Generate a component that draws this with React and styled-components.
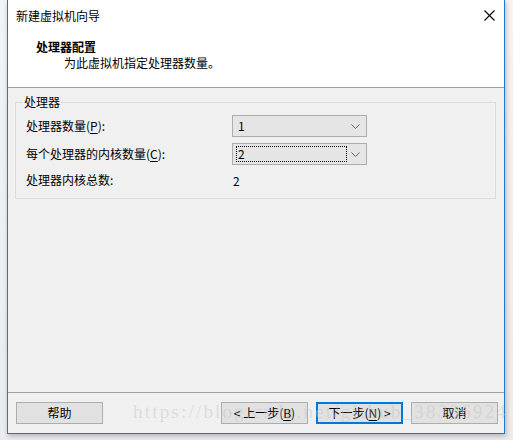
import React from "react";
import styled, { createGlobalStyle } from "styled-components";

const Global = createGlobalStyle`
  html, body { margin: 0; padding: 0; }
  body {
    background: #ededed;
    font-family: "Noto Sans CJK SC", "Noto Sans", sans-serif;
    font-size: 12px;
    color: #000;
    overflow: hidden;
  }
`;

const Page = styled.div`
  width: 513px;
  height: 440px;
  position: relative;
  padding-left: 7px;
  box-sizing: border-box;
  background: linear-gradient(to bottom, #f4f4f4 0%, #ececec 100%);
`;

const Window = styled.div`
  width: 498px;
  height: 434px;
  box-sizing: border-box;
  border: 1px solid #1a7bd0;
  border-top: none;
  display: flex;
  flex-direction: column;
  background: #f0f0f0;
  box-shadow: 1px 2px 5px rgba(0, 0, 0, 0.25);
`;

const TitleBar = styled.div`
  height: 31px;
  background: #fff;
  display: flex;
  align-items: center;
  justify-content: space-between;
  padding: 0 9px 0 8px;
  line-height: 16px;
`;

const Title = styled.span`
  font-size: 12px;
`;

const Header = styled.div`
  background: #fff;
  height: 57px;
  border-bottom: 1px solid #a0a0a0;
  display: flex;
  flex-direction: column;
  padding: 8px 0 0 28px;
  box-sizing: border-box;
`;

const HeaderTitle = styled.div`
  font-weight: bold;
  line-height: 16px;
`;

const HeaderSub = styled.div`
  padding-left: 28px;
  line-height: 16px;
`;

const Body = styled.div`
  flex: 1;
  padding: 6px 8px 0 7px;
`;

const Group = styled.fieldset`
  margin: 0;
  border: 1px solid #dcdcdc;
  padding: 2px 10px 7px 10px;
  width: 481px;
  box-sizing: border-box;
`;

const Legend = styled.legend`
  padding: 0 1px;
  margin-left: -3px;
  line-height: 16px;
`;

const Row = styled.div`
  display: grid;
  grid-template-columns: 206px 135px;
  align-items: center;
  height: 22px;
  margin-top: ${(p) => p.$gap}px;
`;

const Label = styled.span`
  line-height: 16px;
`;

const Key = styled.span`
  text-decoration: underline;
  text-underline-offset: 2px;
`;

const Select = styled.div`
  height: 22px;
  box-sizing: border-box;
  border: 1px solid #adadad;
  background: #e5e5e5;
  display: flex;
  align-items: center;
  justify-content: space-between;
  padding: 0 6px 0 3px;
`;

const SelectValue = styled.span`
  line-height: 14px;
  padding: 0 1px;
  width: ${(p) => (p.$focus ? "111px" : "auto")};
  border: 1px ${(p) => (p.$focus ? "dotted #000" : "solid transparent")};
  box-sizing: border-box;
`;

const Value = styled.span`
  padding-left: 1px;
`;

const Footer = styled.div`
  border-top: 1px solid #a0a0a0;
  height: 41px;
  box-sizing: border-box;
  display: flex;
  align-items: center;
  justify-content: space-between;
  padding: 0 6px 0 8px;
`;

const Buttons = styled.div`
  display: flex;
  gap: 8px;
`;

const Button = styled.button`
  width: 87px;
  height: 22px;
  box-sizing: border-box;
  border: ${(p) => (p.$primary ? "2px solid #0078d7" : "1px solid #adadad")};
  background: #e1e1e1;
  font-family: "Noto Sans CJK SC", "Noto Sans", sans-serif;
  font-size: 12px;
  color: #000;
  padding: 0;
  display: flex;
  align-items: center;
  justify-content: center;
  line-height: 16px;
`;

const Watermark = styled.div`
  position: absolute;
  left: 133px;
  top: 401px;
  font-family: "Liberation Serif", serif;
  font-size: 19px;
  letter-spacing: 2.2px;
  color: rgba(195, 195, 195, 0.45);
  white-space: nowrap;
  pointer-events: none;
`;

const Chevron = () => (
  <svg width="9" height="5" viewBox="0 0 9 5">
    <path d="M0.5 0.5 L4.5 4.5 L8.5 0.5" fill="none" stroke="#606060" strokeWidth="1" />
  </svg>
);

const Close = () => (
  <svg width="11" height="11" viewBox="0 0 11 11">
    <path d="M0.5 0.5 L10.5 10.5 M10.5 0.5 L0.5 10.5" stroke="#000" strokeWidth="1.1" />
  </svg>
);

export default function App() {
  return (
    <Page>
      <Global />
      <Window>
        <TitleBar>
          <Title>新建虚拟机向导</Title>
          <Close />
        </TitleBar>
        <Header>
          <HeaderTitle>处理器配置</HeaderTitle>
          <HeaderSub>为此虚拟机指定处理器数量。</HeaderSub>
        </Header>
        <Body>
          <Group>
            <Legend>处理器</Legend>
            <Row $gap={3}>
              <Label>
                处理器数量(<Key>P</Key>):
              </Label>
              <Select>
                <SelectValue>1</SelectValue>
                <Chevron />
              </Select>
            </Row>
            <Row $gap={6}>
              <Label>
                每个处理器的内核数量(<Key>C</Key>):
              </Label>
              <Select>
                <SelectValue $focus>2</SelectValue>
                <Chevron />
              </Select>
            </Row>
            <Row $gap={4}>
              <Label>处理器内核总数:</Label>
              <Value>2</Value>
            </Row>
          </Group>
        </Body>
        <Footer>
          <Button>帮助</Button>
          <Buttons>
            <Button>
              &lt; 上一步(<Key>B</Key>)
            </Button>
            <Button $primary>
              下一步(<Key>N</Key>) &gt;
            </Button>
            <Button>取消</Button>
          </Buttons>
        </Footer>
      </Window>
      <Watermark>https://blog.csdn.net/github_38336924</Watermark>
    </Page>
  );
}
